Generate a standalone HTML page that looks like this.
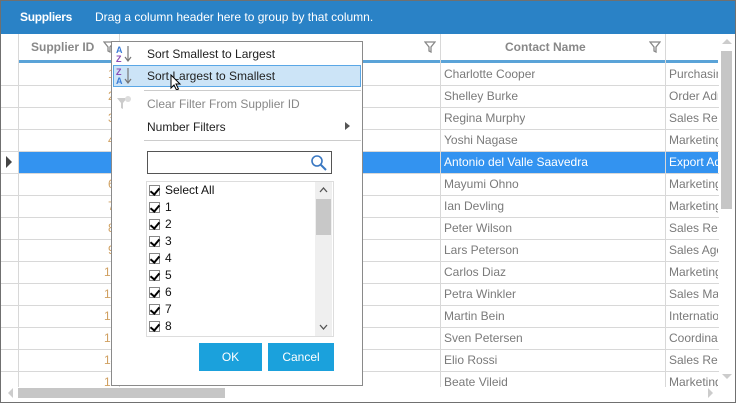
<!DOCTYPE html><html><head><style>
*{margin:0;padding:0;box-sizing:border-box}
body{width:736px;height:403px;overflow:hidden;background:#fff;font-family:"Liberation Sans",sans-serif;font-size:12px;position:relative}
.a{position:absolute}
.t{position:absolute;color:#7a7a7a;font-size:12px;white-space:nowrap;overflow:hidden}
.hl{position:absolute;left:1px;width:718px;height:1px;background:#d8d8d8}
.vl{position:absolute;top:34px;width:1px;height:353px;background:#d8d8d8}
.mi{position:absolute;left:147px;font-size:12px;color:#222}
.cb{position:absolute;left:149px;width:11px;height:11px;border:1px solid #888;background:#fff}
.cb:after{content:"";position:absolute;left:2px;top:0px;width:4px;height:7px;border:solid #000;border-width:0 2px 2px 0;transform:rotate(40deg)}
.li{position:absolute;left:165px;font-size:12px;color:#111}
</style></head><body>
<div class="a" style="left:0;top:0;width:736px;height:403px;border:1px solid #707070"></div>
<div class="a" style="left:1px;top:1px;width:734px;height:33px;background:#2a82c6"></div>
<div class="a" style="left:20px;top:10px;color:#fff;font-weight:bold;font-size:12px;letter-spacing:-0.3px">Suppliers</div>
<div class="a" style="left:95px;top:10px;color:#fff;font-size:12px">Drag a column header here to group by that column.</div>
<div class="a" style="left:19px;top:60px;width:699px;height:3px;background:#5aa3d8"></div>
<div class="a" style="left:31px;top:40px;color:#888;font-weight:bold;font-size:12px">Supplier ID</div>
<div class="a" style="left:505px;top:40px;color:#888;font-weight:bold;font-size:12px">Contact Name</div>
<svg class="a" style="left:424px;top:41px" width="12" height="12"><path d="M1 1h10L7 6v5L5 10V6z" fill="none" stroke="#888" stroke-width="1.3"/></svg>
<svg class="a" style="left:649px;top:41px" width="12" height="12"><path d="M1 1h10L7 6v5L5 10V6z" fill="none" stroke="#888" stroke-width="1.3"/></svg>
<svg class="a" style="left:103px;top:41px" width="12" height="12"><path d="M1 1h10L7 6v5L5 10V6z" fill="none" stroke="#888" stroke-width="1.3"/></svg>
<div class="a" style="left:19px;top:151px;width:699px;height:22px;background:#3393f0"></div>
<svg class="a" style="left:6px;top:156px" width="7" height="12"><path d="M0 0L6 6L0 12z" fill="#444"/></svg>
<div class="vl" style="left:18px"></div><div class="vl" style="left:119px"></div><div class="vl" style="left:440px"></div><div class="vl" style="left:665px"></div>
<div class="hl" style="top:85px"></div><div class="hl" style="top:107px"></div><div class="hl" style="top:129px"></div><div class="hl" style="top:151px"></div><div class="hl" style="top:173px"></div><div class="hl" style="top:195px"></div><div class="hl" style="top:217px"></div><div class="hl" style="top:239px"></div><div class="hl" style="top:261px"></div><div class="hl" style="top:283px"></div><div class="hl" style="top:305px"></div><div class="hl" style="top:327px"></div><div class="hl" style="top:349px"></div><div class="hl" style="top:371px"></div>
<div class="t" style="left:444px;top:67px">Charlotte Cooper</div>
<div class="t" style="left:444px;top:89px">Shelley Burke</div>
<div class="t" style="left:444px;top:111px">Regina Murphy</div>
<div class="t" style="left:444px;top:133px">Yoshi Nagase</div>
<div class="t" style="left:444px;top:155px;color:#fff">Antonio del Valle Saavedra</div>
<div class="t" style="left:444px;top:177px">Mayumi Ohno</div>
<div class="t" style="left:444px;top:199px">Ian Devling</div>
<div class="t" style="left:444px;top:221px">Peter Wilson</div>
<div class="t" style="left:444px;top:243px">Lars Peterson</div>
<div class="t" style="left:444px;top:265px">Carlos Diaz</div>
<div class="t" style="left:444px;top:287px">Petra Winkler</div>
<div class="t" style="left:444px;top:309px">Martin Bein</div>
<div class="t" style="left:444px;top:331px">Sven Petersen</div>
<div class="t" style="left:444px;top:353px">Elio Rossi</div>
<div class="t" style="left:444px;top:375px;height:12px">Beate Vileid</div>
<div class="t" style="left:669px;top:67px;width:49px">Purchasing</div>
<div class="t" style="left:669px;top:89px;width:49px">Order Administrator</div>
<div class="t" style="left:669px;top:111px;width:49px">Sales Rep</div>
<div class="t" style="left:669px;top:133px;width:49px">Marketing</div>
<div class="t" style="left:669px;top:155px;width:49px;color:#fff">Export Admin</div>
<div class="t" style="left:669px;top:177px;width:49px">Marketing</div>
<div class="t" style="left:669px;top:199px;width:49px">Marketing</div>
<div class="t" style="left:669px;top:221px;width:49px">Sales Rep</div>
<div class="t" style="left:669px;top:243px;width:49px">Sales Agent</div>
<div class="t" style="left:669px;top:265px;width:49px">Marketing</div>
<div class="t" style="left:669px;top:287px;width:49px">Sales Manager</div>
<div class="t" style="left:669px;top:309px;width:49px">International</div>
<div class="t" style="left:669px;top:331px;width:49px">Coordinator</div>
<div class="t" style="left:669px;top:353px;width:49px">Sales Rep</div>
<div class="t" style="left:669px;top:375px;width:49px;height:12px">Marketing</div>
<div class="t" style="left:108px;top:67px;color:#d0a060">1</div>
<div class="t" style="left:108px;top:89px;color:#d0a060">2</div>
<div class="t" style="left:108px;top:111px;color:#d0a060">3</div>
<div class="t" style="left:108px;top:133px;color:#d0a060">4</div>
<div class="t" style="left:108px;top:177px;color:#d0a060">6</div>
<div class="t" style="left:108px;top:199px;color:#d0a060">7</div>
<div class="t" style="left:108px;top:221px;color:#d0a060">8</div>
<div class="t" style="left:108px;top:243px;color:#d0a060">9</div>
<div class="t" style="left:104px;top:265px;color:#d0a060">10</div>
<div class="t" style="left:104px;top:287px;color:#d0a060">11</div>
<div class="t" style="left:104px;top:309px;color:#d0a060">12</div>
<div class="t" style="left:104px;top:331px;color:#d0a060">13</div>
<div class="t" style="left:104px;top:353px;color:#d0a060">14</div>
<div class="t" style="left:104px;top:375px;color:#d0a060;height:12px">15</div>
<div class="a" style="left:719px;top:34px;width:16px;height:353px;background:#fff"></div>
<svg class="a" style="left:721px;top:38px" width="12" height="8"><path d="M1 6L6 1L11 6z" fill="#ccc"/></svg>
<div class="a" style="left:721px;top:51px;width:11px;height:158px;background:#c6c6c6"></div>
<svg class="a" style="left:721px;top:373px" width="12" height="8"><path d="M1 1L11 1L6 6z" fill="#ccc"/></svg>
<svg class="a" style="left:7px;top:387px" width="8" height="12"><path d="M6 1L1 6L6 11z" fill="#ccc"/></svg>
<div class="a" style="left:18px;top:388px;width:207px;height:10px;background:#c6c6c6"></div>
<svg class="a" style="left:707px;top:387px" width="8" height="12"><path d="M1 1L6 6L1 11z" fill="#ccc"/></svg>
<div class="a" style="left:111px;top:41px;width:252px;height:345px;background:#fff;border:1px solid #8a8a8a"></div>
<div class="a" style="left:113px;top:65px;width:248px;height:22px;background:#cce4f7;border:1px solid #5aa7e6"></div>
<svg class="a" style="left:114px;top:43px" width="24" height="22"><text x="2" y="10" font-size="9" fill="#3a7bd5" font-family="Liberation Sans" font-weight="bold">A</text><text x="2" y="19" font-size="9" fill="#8a4bb5" font-family="Liberation Sans" font-weight="bold">Z</text><path d="M14 3v14M11 14l3 4 3-4" fill="none" stroke="#777" stroke-width="1.2"/></svg>
<svg class="a" style="left:114px;top:65px" width="24" height="22"><text x="2" y="10" font-size="9" fill="#8a4bb5" font-family="Liberation Sans" font-weight="bold">Z</text><text x="2" y="19" font-size="9" fill="#3a7bd5" font-family="Liberation Sans" font-weight="bold">A</text><path d="M14 3v14M11 14l3 4 3-4" fill="none" stroke="#777" stroke-width="1.2"/></svg>
<div class="mi" style="top:47px">Sort Smallest to Largest</div>
<div class="mi" style="top:69px">Sort Largest to Smallest</div>
<svg class="a" style="left:170px;top:74px" width="14" height="20"><path d="M1 1v13l3-3 2.5 5 2-1-2.5-5h4z" fill="#fff" stroke="#000" stroke-width="1"/></svg>
<div class="a" style="left:144px;top:90px;width:217px;height:1px;background:#ccc"></div>
<svg class="a" style="left:116px;top:95px" width="16" height="16"><path d="M1 3h10L7 8v6L5 13V8z" fill="#ccc"/><circle cx="12" cy="4" r="3" fill="#ddd"/></svg>
<div class="mi" style="top:97px;color:#888">Clear Filter From Supplier ID</div>
<div class="mi" style="top:120px">Number Filters</div>
<svg class="a" style="left:345px;top:122px" width="6" height="8"><path d="M0 0L5 4L0 8z" fill="#555"/></svg>
<div class="a" style="left:144px;top:140px;width:217px;height:1px;background:#ccc"></div>
<div class="a" style="left:147px;top:151px;width:185px;height:23px;border:1px solid #555"></div>
<svg class="a" style="left:310px;top:154px" width="18" height="18"><circle cx="7" cy="7" r="5" fill="none" stroke="#3a78c2" stroke-width="1.6"/><path d="M11 11l5 5" stroke="#3a78c2" stroke-width="2"/></svg>
<div class="a" style="left:146px;top:181px;width:188px;height:156px;border:1px solid #ddd"></div>
<div class="a" style="left:315px;top:182px;width:17px;height:154px;background:#efefef"></div>
<div class="a" style="left:316px;top:199px;width:15px;height:36px;background:#c8c8c8"></div>
<svg class="a" style="left:319px;top:187px" width="9" height="6"><path d="M1 5L4.5 1L8 5" fill="none" stroke="#555" stroke-width="1.3"/></svg>
<svg class="a" style="left:319px;top:324px" width="9" height="6"><path d="M1 1L4.5 5L8 1" fill="none" stroke="#555" stroke-width="1.3"/></svg>
<div class="cb" style="top:185px"></div><div class="li" style="top:183px">Select All</div>
<div class="cb" style="top:202px"></div><div class="li" style="top:200px">1</div>
<div class="cb" style="top:219px"></div><div class="li" style="top:217px">2</div>
<div class="cb" style="top:236px"></div><div class="li" style="top:234px">3</div>
<div class="cb" style="top:253px"></div><div class="li" style="top:251px">4</div>
<div class="cb" style="top:270px"></div><div class="li" style="top:268px">5</div>
<div class="cb" style="top:287px"></div><div class="li" style="top:285px">6</div>
<div class="cb" style="top:304px"></div><div class="li" style="top:302px">7</div>
<div class="cb" style="top:321px"></div><div class="li" style="top:319px">8</div>
<div class="a" style="left:199px;top:343px;width:63px;height:28px;background:#1ba1dc;color:#fff;text-align:center;line-height:28px">OK</div>
<div class="a" style="left:268px;top:343px;width:66px;height:28px;background:#1ba1dc;color:#fff;text-align:center;line-height:28px">Cancel</div>
</body></html>
